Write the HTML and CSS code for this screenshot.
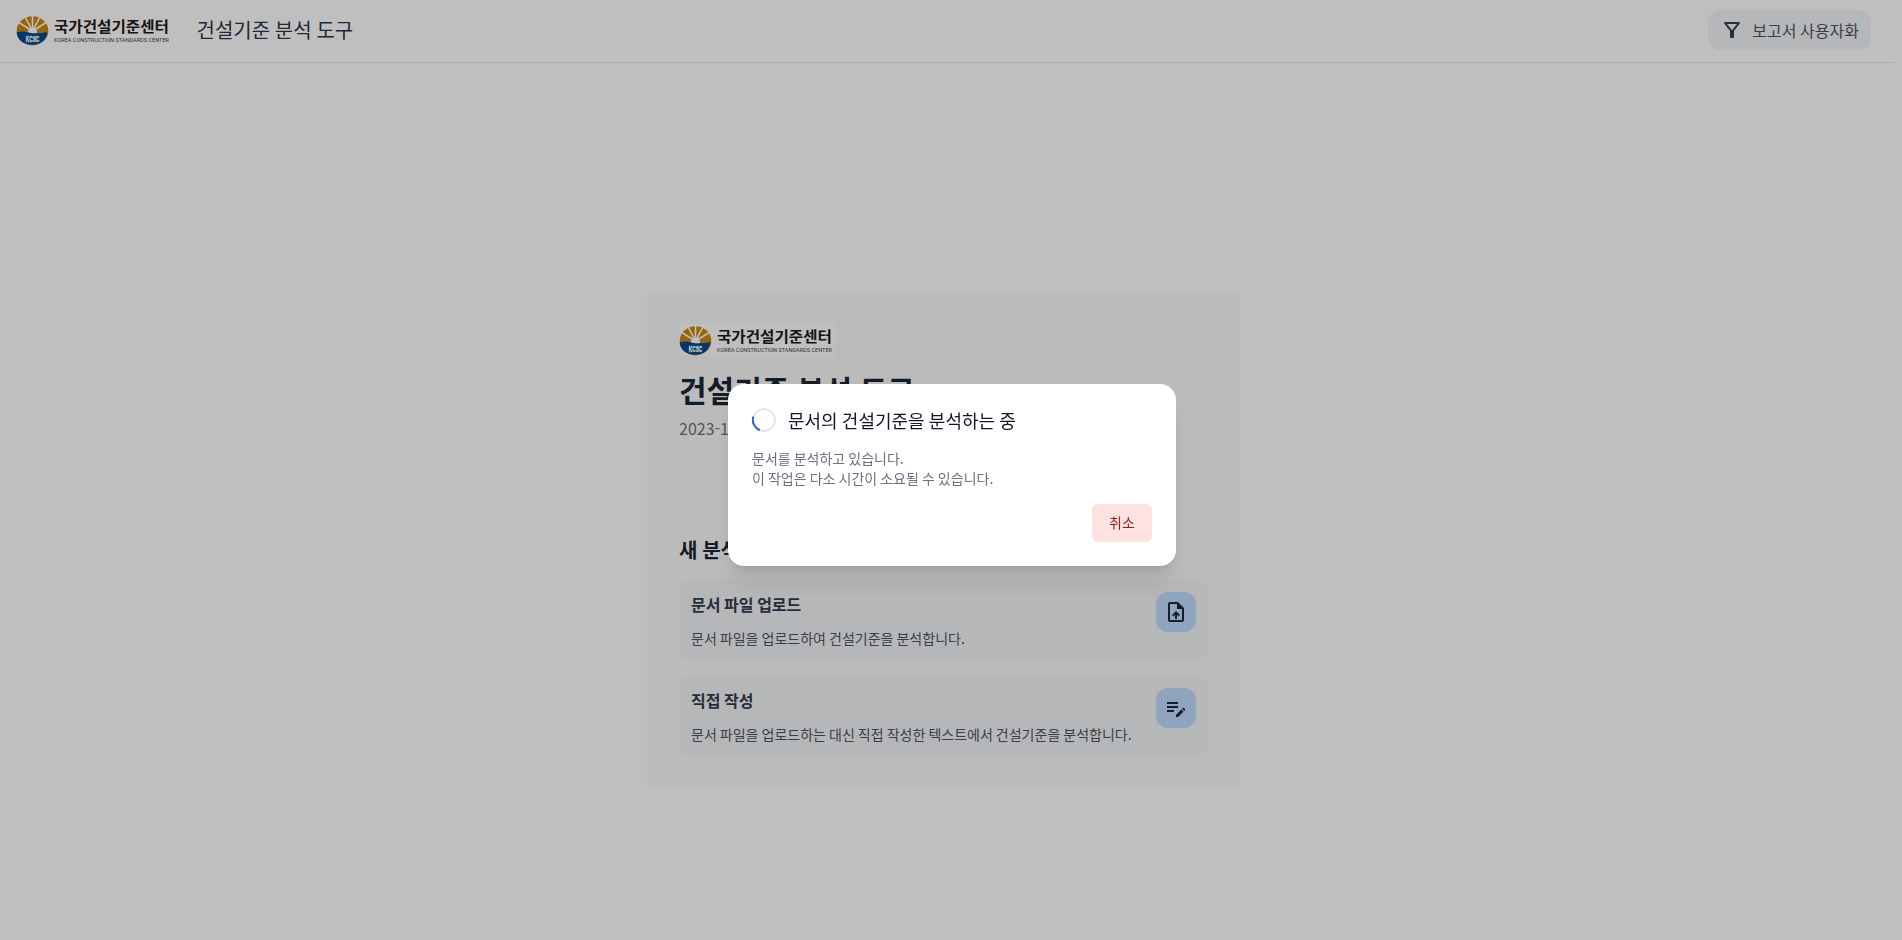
FILE: index.html
```html
<!DOCTYPE html>
<html lang="ko">
<head>
<meta charset="utf-8">
<title>건설기준 분석 도구</title>
<link rel="stylesheet" href="styles.css">
</head>
<body>
<svg class="defs" width="0" height="0" aria-hidden="true">
  <symbol id="logo" viewBox="0 0 156 32">
    <rect width="156" height="32" fill="#fff"/>
    <clipPath id="dome"><path d="M0 17V1H33V17Q25 15.6 20 16.4H13Q8 15.6 0 17Z"/></clipPath>
    <g clip-path="url(#dome)">
      <ellipse cx="16.5" cy="16.8" rx="15.8" ry="14.6" fill="#cd870c"/>
      <path d="M16.5 18V0M16.5 17L7.5 0M16.5 17L25.5 0M16.5 17L-2 5.5M16.5 17L35 5.5" stroke="#fff" stroke-width="1.6"/>
      <ellipse cx="16.5" cy="17.4" rx="4.6" ry="3.6" fill="#fff"/>
    </g>
    <path d="M.7 18Q8 16.8 12.5 18.4Q20 20.4 31.3 18C31.3 25.3 24.8 30.8 16 30.8S.7 25.3.7 18Z" fill="#004c95"/>
    <text x="9.8" y="28.2" class="logo-mark" textLength="13.4" lengthAdjust="spacingAndGlyphs">KCSC</text>
    <text x="38" y="18.2" class="logo-name" textLength="115" lengthAdjust="spacingAndGlyphs">국가건설기준센터</text>
    <text x="38" y="27.8" class="logo-sub" textLength="115" lengthAdjust="spacingAndGlyphs">KOREA CONSTRUCTION STANDARDS CENTER</text>
  </symbol>
</svg>

<header class="topbar">
  <svg class="logo"><use href="#logo"/></svg>
  <div class="topbar-title">건설기준 분석 도구</div>
  <button class="customize">
    <svg class="icon" viewBox="0 0 24 24"><path d="M7 6h10l-5.01 6.3L7 6zm-2.75-.39C6.27 8.2 10 13 10 13v6c0 .55.45 1 1 1h2c.55 0 1-.45 1-1v-6s3.72-4.8 5.74-7.39A.998.998 0 0 0 18.95 4H5.04c-.83 0-1.3.95-.79 1.61z"/></svg>
    <span>보고서 사용자화</span>
  </button>
</header>

<main class="stage">
  <section class="card">
    <svg class="logo"><use href="#logo"/></svg>
    <h1 class="card-title">건설기준 분석 도구</h1>
    <p class="card-date">2023-12</p>
    <h2 class="card-subtitle">새 분석</h2>
    <div class="options">
      <div class="option">
        <div class="option-body">
          <h3 class="option-title">문서 파일 업로드</h3>
          <p class="option-text">문서 파일을 업로드하여 건설기준을 분석합니다.</p>
        </div>
        <button class="option-btn"><svg class="icon" viewBox="0 0 24 24"><path d="M14 2H6c-1.1 0-1.99.9-1.99 2L4 20c0 1.1.89 2 1.99 2H18c1.1 0 2-.9 2-2V8l-6-6zm4 18H6V4h7v5h5v11zM8 15.01l1.41 1.41L11 14.84V19h2v-4.16l1.59 1.59L16 15.01 12.01 11 8 15.01z"/></svg></button>
      </div>
      <div class="option">
        <div class="option-body">
          <h3 class="option-title">직접 작성</h3>
          <p class="option-text">문서 파일을 업로드하는 대신 직접 작성한 텍스트에서 건설기준을 분석합니다.</p>
        </div>
        <button class="option-btn"><svg class="icon" viewBox="0 0 24 24"><path d="M3 10h11v2H3v-2zm0-2h11V6H3v2zm0 8h7v-2H3v2zm15.01-3.13.71-.71c.39-.39 1.02-.39 1.41 0l.71.71c.39.39.39 1.02 0 1.41l-.71.71-2.12-2.12zm-.71.71-5.3 5.3V21h2.12l5.3-5.3-2.12-2.12z"/></svg></button>
      </div>
    </div>
  </section>
</main>

<div class="overlay">
  <div class="modal" role="dialog">
    <div class="modal-head">
      <svg class="spinner" viewBox="0 0 24 24"><circle cx="12" cy="12" r="11" stroke="#e5e7eb"/><path d="M1.35 8.6A11 11 0 0 0 7.8 22.2" stroke="#2563eb"/></svg>
      <h3 class="modal-title">문서의 건설기준을 분석하는 중</h3>
    </div>
    <p class="modal-text">문서를 분석하고 있습니다.<br>이 작업은 다소 시간이 소요될 수 있습니다.</p>
    <div class="modal-actions"><button class="cancel">취소</button></div>
  </div>
</div>
</body>
</html>
```
FILE: styles.css
```css
* { box-sizing: border-box; margin: 0; }
body {
  height: 940px;
  overflow: hidden;
  display: flex;
  flex-direction: column;
  background: #fff;
  color: #1b2636;
  font: 16px/24px "Noto Sans CJK KR", sans-serif;
}
body, button { word-spacing: -.053em; }
button { border: 0; font: inherit; }
.defs { display: none; }
.icon { width: 24px; height: 24px; fill: #1f2937; flex: none; }
.logo { width: 156px; height: 32px; display: block; flex: none; }
.logo-name { font: 700 15px "Noto Sans CJK KR", sans-serif; fill: #231815; }
.logo-sub { font: 400 5.8px Roboto, sans-serif; word-spacing: 0; fill: #444; }
.logo-mark { font: 700 9px "Liberation Sans", sans-serif; fill: #fff; stroke: #fff; stroke-width: .4px; }

.topbar {
  width: 1895px;
  height: 63px;
  padding: 0 24px 2px 16px;
  display: flex;
  align-items: center;
  border-bottom: 1px solid #e5e7eb;
}
.topbar-title { margin-left: 24.5px; font-size: 20px; line-height: 28px; color: #2b3748; }
.customize {
  margin-left: auto;
  height: 40px;
  padding: 0 12px;
  display: flex;
  align-items: center;
  gap: 8px;
  border-radius: 12px;
  background: #f3f4f6;
  color: #4b5563;
}
.customize .icon { fill: #374151; }
.customize span { padding-bottom: 1px; }

.stage { flex: 1; width: 1887px; padding-top: 229px; }
.card {
  width: 593px;
  margin: 0 auto;
  padding: 32px;
  border-radius: 8px;
  background: #fafafa;
}
.card-title { margin-top: 15px; font-size: 30px; line-height: 36px; font-weight: 700; }
.card-date { margin-top: 9px; color: #6b7280; }
.card-subtitle { margin-top: 96px; font-size: 20px; line-height: 28px; font-weight: 600; }
.options { margin-top: 16px; display: flex; flex-direction: column; gap: 16px; }
.option {
  height: 80px;
  padding: 12px;
  display: flex;
  justify-content: space-between;
  border-radius: 12px;
  background: #f3f4f6;
}
.option-title { font-size: 16px; line-height: 24px; font-weight: 600; color: #323c4c; }
.option-text { margin-top: 12px; font-size: 14px; line-height: 20px; color: #4b5563; }
.option-btn {
  width: 40px;
  height: 40px;
  padding: 8px;
  border-radius: 12px;
  background: #bfdbfe;
}
.option-btn .icon { display: block; }

.overlay {
  position: fixed;
  inset: 0;
  padding: 384px 0 0 2px;
  background: rgba(0, 0, 0, .25);
}
.modal {
  width: 448px;
  height: 182px;
  margin: 0 auto;
  padding: 24px;
  border-radius: 16px;
  background: #fff;
  box-shadow: 0 20px 25px -5px rgba(0, 0, 0, .1), 0 8px 10px -6px rgba(0, 0, 0, .1);
}
.modal-head { display: flex; gap: 12px; height: 28px; }
.spinner { width: 24px; height: 24px; fill: none; stroke-width: 2; }
.modal-title { font-size: 18px; line-height: 24px; font-weight: 400; color: #111827; }
.modal-text { margin-top: 12px; font-size: 14px; line-height: 20px; color: #6b7280; }
.modal-actions { margin-top: 16px; display: flex; justify-content: flex-end; }
.cancel {
  width: 60px;
  height: 38px;
  padding-bottom: 3px;
  border-radius: 6px;
  background: #fee2e2;
  color: #8f2222;
  font-size: 14px;
  font-weight: 400;
}
```
